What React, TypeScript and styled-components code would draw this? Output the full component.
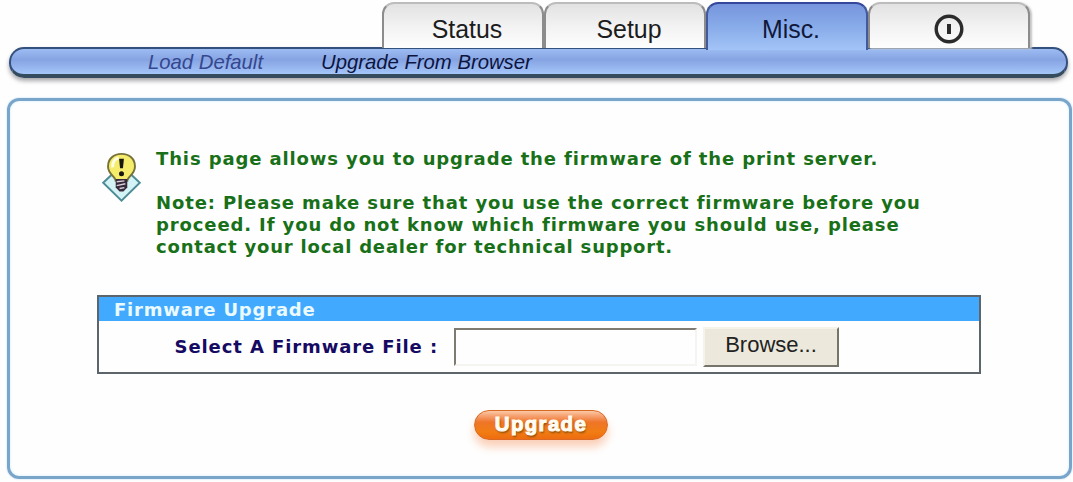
import styled, { createGlobalStyle } from "styled-components";

const GlobalStyle = createGlobalStyle`
  * {
    box-sizing: border-box;
  }

  body {
    margin: 0;
    background: #fefefe;
  }
`;

const Page = styled.div`
  width: 1073px;
  height: 482px;
  overflow: hidden;
  display: flex;
  flex-direction: column;
  padding: 2px 1px 0 7px;
  font-family: "Liberation Sans", Arial, sans-serif;
`;

const Tabs = styled.nav`
  display: flex;
  height: 46px;
  padding-left: 375px;
`;

const Tab = styled.a<{ $active?: boolean; $icon?: boolean }>`
  position: relative;
  z-index: ${(p) => (p.$active ? 1 : 0)};
  width: 162px;
  height: ${(p) => (p.$active ? 48 : 46)}px;
  display: flex;
  align-items: center;
  justify-content: center;
  padding: 6px 0 ${(p) => (p.$active ? 2 : 0)}px ${(p) => (p.$icon ? 0 : 8)}px;
  border: 2px solid ${(p) => (p.$active ? "#42599c" : "#8c8c8c")};
  border-top-color: ${(p) => (p.$active ? "#34479a" : "#bcbcbc")};
  border-bottom: 0;
  border-radius: 12px 12px 0 0;
  background: ${(p) =>
    p.$active
      ? "linear-gradient(#7795dd, #86a9e8 45%, #a2c4f7)"
      : "linear-gradient(#e2e2e2, #f2f2f2 50%, #fdfdfd)"};
  box-shadow: ${(p) => (p.$icon ? "2px 1px 2px #c4c4c4" : "none")};
  color: ${(p) => (p.$active ? "#10183a" : "#1c1c1c")};
  font-size: 24.9px;
`;

const MenuBar = styled.div`
  flex: none;
  display: flex;
  align-items: center;
  gap: 58px;
  height: 31px;
  margin: -1px 4px 0 2px;
  padding: 0 0 0 137px;
  border: 2px solid #34507c;
  border-bottom: 4px solid #344c5e;
  border-radius: 15px;
  background: linear-gradient(#9dbcf3, #86a4e2 42%, #8ba9e6 52%, #a4c6fa);
  box-shadow: 0 3px 4px #a9a9ad;
`;

const MenuItem = styled.a<{ $current?: boolean }>`
  color: ${(p) => (p.$current ? "#0c1440" : "#35478f")};
  font-size: 20.3px;
  line-height: 24px;
  font-style: italic;
  white-space: nowrap;
`;

const Panel = styled.main`
  flex: none;
  height: 381px;
  margin-top: 20px;
  padding: 45px 87px 0;
  border: 3px solid #7aa5cb;
  border-radius: 12px;
  box-shadow: 0 0 2px #b5d5ee, inset 0 0 3px #d5effa;
`;

const Notice = styled.section`
  display: flex;
  height: 149px;
  padding-left: 3px;
`;

const BulbIcon = styled.svg`
  flex: none;
  margin: 5px 14px 0 1px;
`;

const NoticeText = styled.div`
  padding-top: 2px;
  color: #187018;
  font: bold 18px/22px "DejaVu Sans", Verdana, sans-serif;
  white-space: nowrap;
`;

const Line = styled.div<{ $spacing?: number }>`
  height: 22px;
  letter-spacing: ${(p) => p.$spacing ?? 0.88}px;
`;

const Form = styled.section`
  width: 884px;
  height: 79px;
  border: 2px solid #5c646c;
  font: bold 18px/22px "DejaVu Sans", Verdana, sans-serif;
`;

const FormTitle = styled.h2`
  height: 24px;
  margin: 0;
  padding: 2px 0 0 15px;
  background: #41aaff;
  color: #eafaff;
  font: inherit;
  letter-spacing: 0.8px;
`;

const Field = styled.label`
  display: flex;
  align-items: center;
  height: 51px;
  color: #160a62;
`;

const FieldName = styled.span`
  width: 355px;
  padding-right: 16px;
  text-align: right;
  letter-spacing: 0.9px;
  white-space: nowrap;
`;

const FileInput = styled.input`
  width: 243px;
  height: 38px;
  border: 2px solid #7f7b70;
  border-right-color: #f5f4f0;
  border-bottom-color: #f5f4f0;
  background: #fefefe;
`;

const BrowseButton = styled.button`
  width: 136px;
  height: 40px;
  margin-left: 6px;
  padding: 0 0 3px;
  border: 2px solid #f5f3ea;
  border-right-color: #77746a;
  border-bottom-color: #77746a;
  background: #ece9dc;
  color: #222;
  font: 22px "Liberation Sans", Arial, sans-serif;
`;

const UpgradeButton = styled.button`
  display: block;
  width: 134px;
  height: 30px;
  margin: 36px 0 0 377px;
  padding: 0 0 3px;
  border: 1px solid #d96a25;
  border-radius: 15px;
  background: linear-gradient(#fbc9a5, #f6a070 18%, #ee7528 40%, #f17d13 75%, #ee6c10);
  box-shadow: 0 7px 8px #fbd0b8;
  color: #fffdf3;
  font: bold 20.5px/24px "Liberation Sans", Arial, sans-serif;
  letter-spacing: 1.3px;
  text-shadow: 1px 2px 2px #8a4a08;
  -webkit-text-stroke: 1px #fffdf3;
`;

const PowerIcon = () => (
  <svg width="32" height="32" viewBox="0 0 32 32" fill="none" stroke="#2b2b2b">
    <circle cx="16" cy="16" r="12.8" strokeWidth="3.4" />
    <path d="M16 11v10" strokeWidth="4" />
  </svg>
);

const Bulb = () => (
  <BulbIcon width="41" height="52" viewBox="0 0 42 54">
    <path d="M2 33 21 15l19 18-19 18.500z" fill="#d4f3f7" stroke="#4d8c94" strokeWidth="2" />
    <path
      d="M15 31c0-4-8-7-8-15C7 8 13 3 21 3s14 5 14 13c0 8-8 11-8 15z"
      fill="#f5ec6c"
      stroke="#77713a"
      strokeWidth="2"
    />
    <path d="M12 17c-1-5 2-9 6-10" fill="none" stroke="#fffde0" strokeWidth="3" />
    <path d="M18.500 8h5l-1 10h-3z" fill="#171710" />
    <circle cx="21" cy="23.500" r="2.600" fill="#171710" />
    <path d="M15 29h12v9l-4 4h-4l-4-4z" fill="#35293b" />
    <path d="M16 32l8-1M16 36l9-2M19 39l5-1" stroke="#d8d0d8" strokeWidth="1.500" />
  </BulbIcon>
);

export default function App() {
  return (
    <>
      <GlobalStyle />
      <Page>
        <Tabs>
          <Tab>Status</Tab>
          <Tab>Setup</Tab>
          <Tab $active>Misc.</Tab>
          <Tab $icon>
            <PowerIcon />
          </Tab>
        </Tabs>
        <MenuBar>
          <MenuItem>Load Default</MenuItem>
          <MenuItem $current>Upgrade From Browser</MenuItem>
        </MenuBar>
        <Panel>
          <Notice>
            <Bulb />
            <NoticeText>
              <Line>This page allows you to upgrade the firmware of the print server.</Line>
              <Line />
              <Line>Note: Please make sure that you use the correct firmware before you</Line>
              <Line>proceed. If you do not know which firmware you should use, please</Line>
              <Line $spacing={0.8}>contact your local dealer for technical support.</Line>
            </NoticeText>
          </Notice>
          <Form>
            <FormTitle>Firmware Upgrade</FormTitle>
            <Field>
              <FieldName>Select A Firmware File :</FieldName>
              <FileInput type="text" />
              <BrowseButton type="button">Browse...</BrowseButton>
            </Field>
          </Form>
          <UpgradeButton type="button">Upgrade</UpgradeButton>
        </Panel>
      </Page>
    </>
  );
}
